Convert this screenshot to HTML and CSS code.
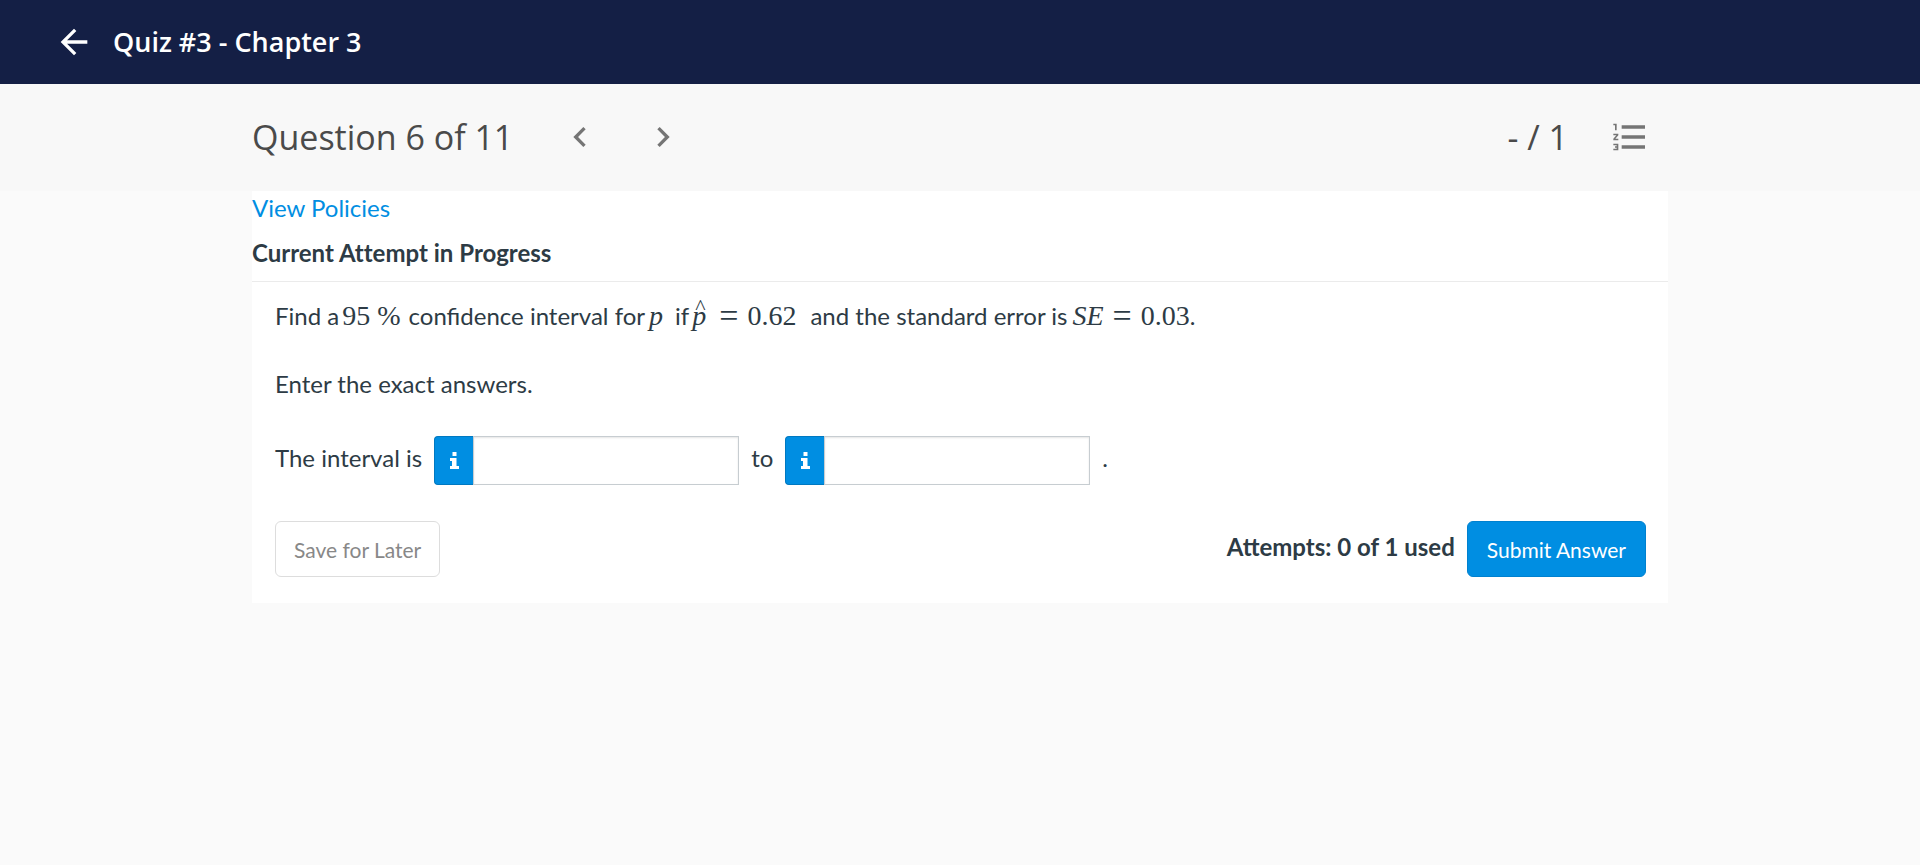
FILE: index.html
```html
<!DOCTYPE html>
<html lang="en">
<head>
<meta charset="utf-8">
<meta name="viewport" content="width=device-width, initial-scale=1">
<title>Quiz #3 - Chapter 3</title>
<link rel="stylesheet" href="styles.css">
</head>
<body>
<header class="topbar">
  <button class="icon-button" type="button" aria-label="Back">
    <svg width="40" height="40" viewBox="0 0 24 24" fill="currentColor"><path d="M20 11H7.830l5.590-5.590L12 4l-8 8 8 8 1.410-1.410L7.830 13H20v-2z"/></svg>
  </button>
  <h1 class="topbar-title">Quiz #3 - Chapter 3</h1>
</header>
<div class="question-bar">
  <div class="question-bar-inner">
    <h2 class="question-title">Question 6 of 11</h2>
    <nav class="pager" aria-label="Questions">
      <button class="icon-button" type="button" aria-label="Previous question">
        <svg width="40" height="40" viewBox="0 0 24 24" fill="currentColor"><path d="M15.410 7.410L14 6l-6 6 6 6 1.410-1.410L10.830 12z"/></svg>
      </button>
      <button class="icon-button" type="button" aria-label="Next question">
        <svg width="40" height="40" viewBox="0 0 24 24" fill="currentColor"><path d="M10 6L8.590 7.410 13.170 12l-4.580 4.590L10 18l6-6z"/></svg>
      </button>
    </nav>
    <span class="score">- / 1</span>
    <button class="icon-button" type="button" aria-label="Question list">
      <svg width="40" height="40" viewBox="0 0 24 24" fill="currentColor"><path d="M2 17h2v.5H3v1h1v.5H2v1h3v-4H2v1zm1-9h1V4H2v1h1v3zm-1 3h1.800L2 13.100v.9h3v-1H3.200L5 10.900V10H2v1zm5-6v2h14V5H7zm0 14h14v-2H7v2zm0-6h14v-2H7v2z"/></svg>
    </button>
  </div>
</div>
<main class="card">
  <a class="policies" href="#">View Policies</a>
  <h3 class="attempt-title">Current Attempt in Progress</h3>
  <form class="question">
    <p class="prompt">Find a<span class="math percent">95 %</span>confidence interval for<i class="math term">p</i>if<i class="math hat">p</i><span class="math equals">=</span><span class="math value">0.62</span>and the standard error is<i class="math symbol">SE</i><span class="math equals">=</span><span class="math">0.03</span>.</p>
    <p class="prompt">Enter the exact answers.</p>
    <div class="answer">
      <label class="answer-text" for="lower">The interval is</label>
      <span class="field">
        <button class="info" type="button" aria-label="Information"><svg width="9" height="17" viewBox="0 0 9 17" fill="currentColor"><path d="M2.500 0H6.500V4H2.500ZM0 6H6.500V14H9V17H0V14H2V9H0Z"/></svg></button>
        <input class="entry" id="lower" type="text">
      </span>
      <label class="answer-text" for="upper">to</label>
      <span class="field">
        <button class="info" type="button" aria-label="Information"><svg width="9" height="17" viewBox="0 0 9 17" fill="currentColor"><path d="M2.500 0H6.500V4H2.500ZM0 6H6.500V14H9V17H0V14H2V9H0Z"/></svg></button>
        <input class="entry" id="upper" type="text">
      </span>
      <span class="answer-text">.</span>
    </div>
    <div class="actions">
      <button class="button" type="button">Save for Later</button>
      <strong class="attempts">Attempts: 0 of 1 used</strong>
      <button class="button button-primary" type="submit">Submit Answer</button>
    </div>
  </form>
</main>
</body>
</html>
```
FILE: styles.css
```css
* { box-sizing: border-box; }

body {
  margin: 0;
  background: #fafafa;
  color: #2d3b45;
  font: 24px/32px Lato, sans-serif;
}

h1, h2, h3, p { margin: 0; }

.icon-button {
  display: flex;
  padding: 0;
  border: 0;
  background: none;
  color: inherit;
  cursor: pointer;
}

.topbar {
  display: flex;
  align-items: center;
  gap: 19px;
  min-height: 84px;
  padding: 0 54px;
  background: #141f45;
  color: #fff;
}

.topbar-title { font: 600 27px/36px "Open Sans", sans-serif; }

.question-bar { background: #f8f8f8; }

.question-bar-inner {
  display: flex;
  align-items: center;
  max-width: 1416px;
  min-height: 107px;
  margin: 0 auto;
  padding: 0 18px 1px 0;
  color: #757575;
}

.question-title, .score {
  padding-bottom: 1px;
  color: #4a4a4a;
  font: 400 34px/46px "Open Sans", sans-serif;
}

.pager {
  display: flex;
  gap: 43px;
  margin-left: 47px;
}

.score { margin: 0 42px 0 auto; }

.card {
  max-width: 1416px;
  margin: 0 auto;
  padding-bottom: 26px;
  background: #fff;
}

.policies {
  display: block;
  padding-top: 1px;
  color: #008ee2;
  text-decoration: none;
}

.attempt-title {
  padding: 13px 0 12px;
  border-bottom: 1px solid #ebebeb;
  font-size: 24px;
  font-weight: 700;
  font-variant-ligatures: none;
}

.question { padding: 18px 22px 0 23px; }

.prompt {
  margin-bottom: 36px;
  line-height: 32px;
}

.math {
  font-family: "Liberation Serif", serif;
  font-size: 28px;
  line-height: 24px;
}

.percent { margin: 0 8px 0 3px; }
.term { margin: 0 12px 0 4px; }
.symbol { margin-left: 5px; }
.value { margin-right: 14px; }

.equals {
  margin: 0 9px;
  font-size: 34px;
  vertical-align: -2px;
}

.hat {
  position: relative;
  margin: 0 4px 0 3px;
}

.hat::after {
  content: "^";
  position: absolute;
  top: -5px;
  left: 3px;
  font-size: 22px;
  font-style: normal;
}

.answer {
  display: flex;
  align-items: center;
  gap: 12px;
}

.answer-text { padding-bottom: 5px; }

.field { display: flex; }

.info {
  display: flex;
  align-items: center;
  justify-content: center;
  width: 39px;
  padding: 0;
  border: 1px solid #0079c1;
  border-right: 0;
  border-radius: 4px 0 0 4px;
  background: #008ee2;
  color: #fff;
}

.entry {
  width: 266px;
  height: 49px;
  padding: 6px 12px;
  border: 1px solid #c7cdd1;
  box-shadow: inset 0 1px 2px #e5e5e5;
  font: inherit;
}

.actions {
  display: flex;
  align-items: center;
  gap: 12px;
  margin-top: 36px;
}

.button {
  height: 56px;
  padding: 2px 18px 0;
  border: 1px solid #ddd;
  border-radius: 6px;
  background: #fff;
  color: #888;
  font: 21px/28px Lato, sans-serif;
}

.button-primary {
  padding: 2px 19px 0;
  border-color: #0081cf;
  background: #008ee2;
  color: #fff;
}

.attempts {
  margin-left: auto;
  padding-bottom: 5px;
}
```
